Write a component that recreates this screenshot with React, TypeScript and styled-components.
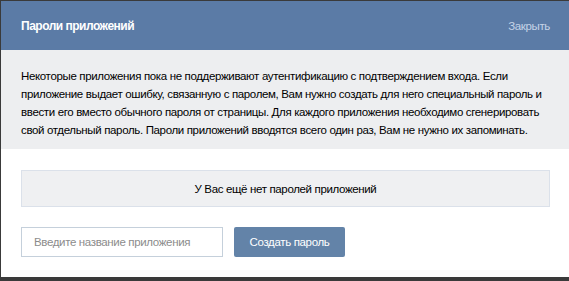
import React from "react";
import styled, { createGlobalStyle } from "styled-components";

const GlobalStyle = createGlobalStyle`
  html, body {
    margin: 0;
    padding: 0;
    background: #3a3a3a;
  }
  body {
    font-family: "Liberation Sans", Arial, sans-serif;
    font-size: 11.5px;
    letter-spacing: -0.35px;
  }
`;

const Modal = styled.div`
  margin: 1px 0 0 1px;
  width: 568px;
  background: #fff;
  display: flex;
  flex-direction: column;
`;

const Header = styled.div`
  height: 49px;
  display: flex;
  align-items: center;
  justify-content: space-between;
  padding: 0 19px 0 20px;
  background: #5b7ba6;
`;

const Title = styled.h2`
  margin: 0;
  font-size: 12px;
  font-weight: 700;
  letter-spacing: -0.5px;
  color: #fff;
`;

const CloseLink = styled.a`
  color: #c5d3e6;
  cursor: pointer;
`;

const Info = styled.div`
  background: #edeef0;
  padding: 17px 20px 10px;
  line-height: 18px;
  color: #000;
`;

const Line = styled.div`
  white-space: nowrap;
`;

const Body = styled.div`
  display: flex;
  flex-direction: column;
  gap: 20px;
  padding: 21px 19px 20px 20px;
`;

const EmptyBox = styled.div`
  height: 35px;
  display: flex;
  align-items: center;
  justify-content: center;
  background: #eff0f2;
  border: 1px solid #dbe1ea;
  color: #000;
`;

const Row = styled.div`
  display: flex;
  gap: 11px;
`;

const Input = styled.input`
  box-sizing: border-box;
  width: 202px;
  height: 30px;
  padding: 0 12px;
  border: 1px solid #c5d0db;
  font-family: inherit;
  font-size: inherit;
  letter-spacing: inherit;
  outline: none;
  &::placeholder {
    color: #8c8c8c;
  }
`;

const Button = styled.button`
  height: 30px;
  width: 111px;
  padding: 0;
  border: none;
  border-radius: 2px;
  background: #6383a8;
  color: #fff;
  font-family: inherit;
  font-size: inherit;
  letter-spacing: inherit;
  cursor: pointer;
`;

const infoLines = [
  "Некоторые приложения пока не поддерживают аутентификацию с подтверждением входа. Если",
  "приложение выдает ошибку, связанную с паролем, Вам нужно создать для него специальный пароль и",
  "ввести его вместо обычного пароля от страницы. Для каждого приложения необходимо сгенерировать",
  "свой отдельный пароль. Пароли приложений вводятся всего один раз, Вам не нужно их запоминать.",
];

export default function App() {
  return (
    <>
      <GlobalStyle />
      <Modal>
        <Header>
          <Title>Пароли приложений</Title>
          <CloseLink>Закрыть</CloseLink>
        </Header>
        <Info>
          {infoLines.map((line) => (
            <Line key={line}>{line}</Line>
          ))}
        </Info>
        <Body>
          <EmptyBox>У Вас ещё нет паролей приложений</EmptyBox>
          <Row>
            <Input placeholder="Введите название приложения" />
            <Button>Создать пароль</Button>
          </Row>
        </Body>
      </Modal>
    </>
  );
}
